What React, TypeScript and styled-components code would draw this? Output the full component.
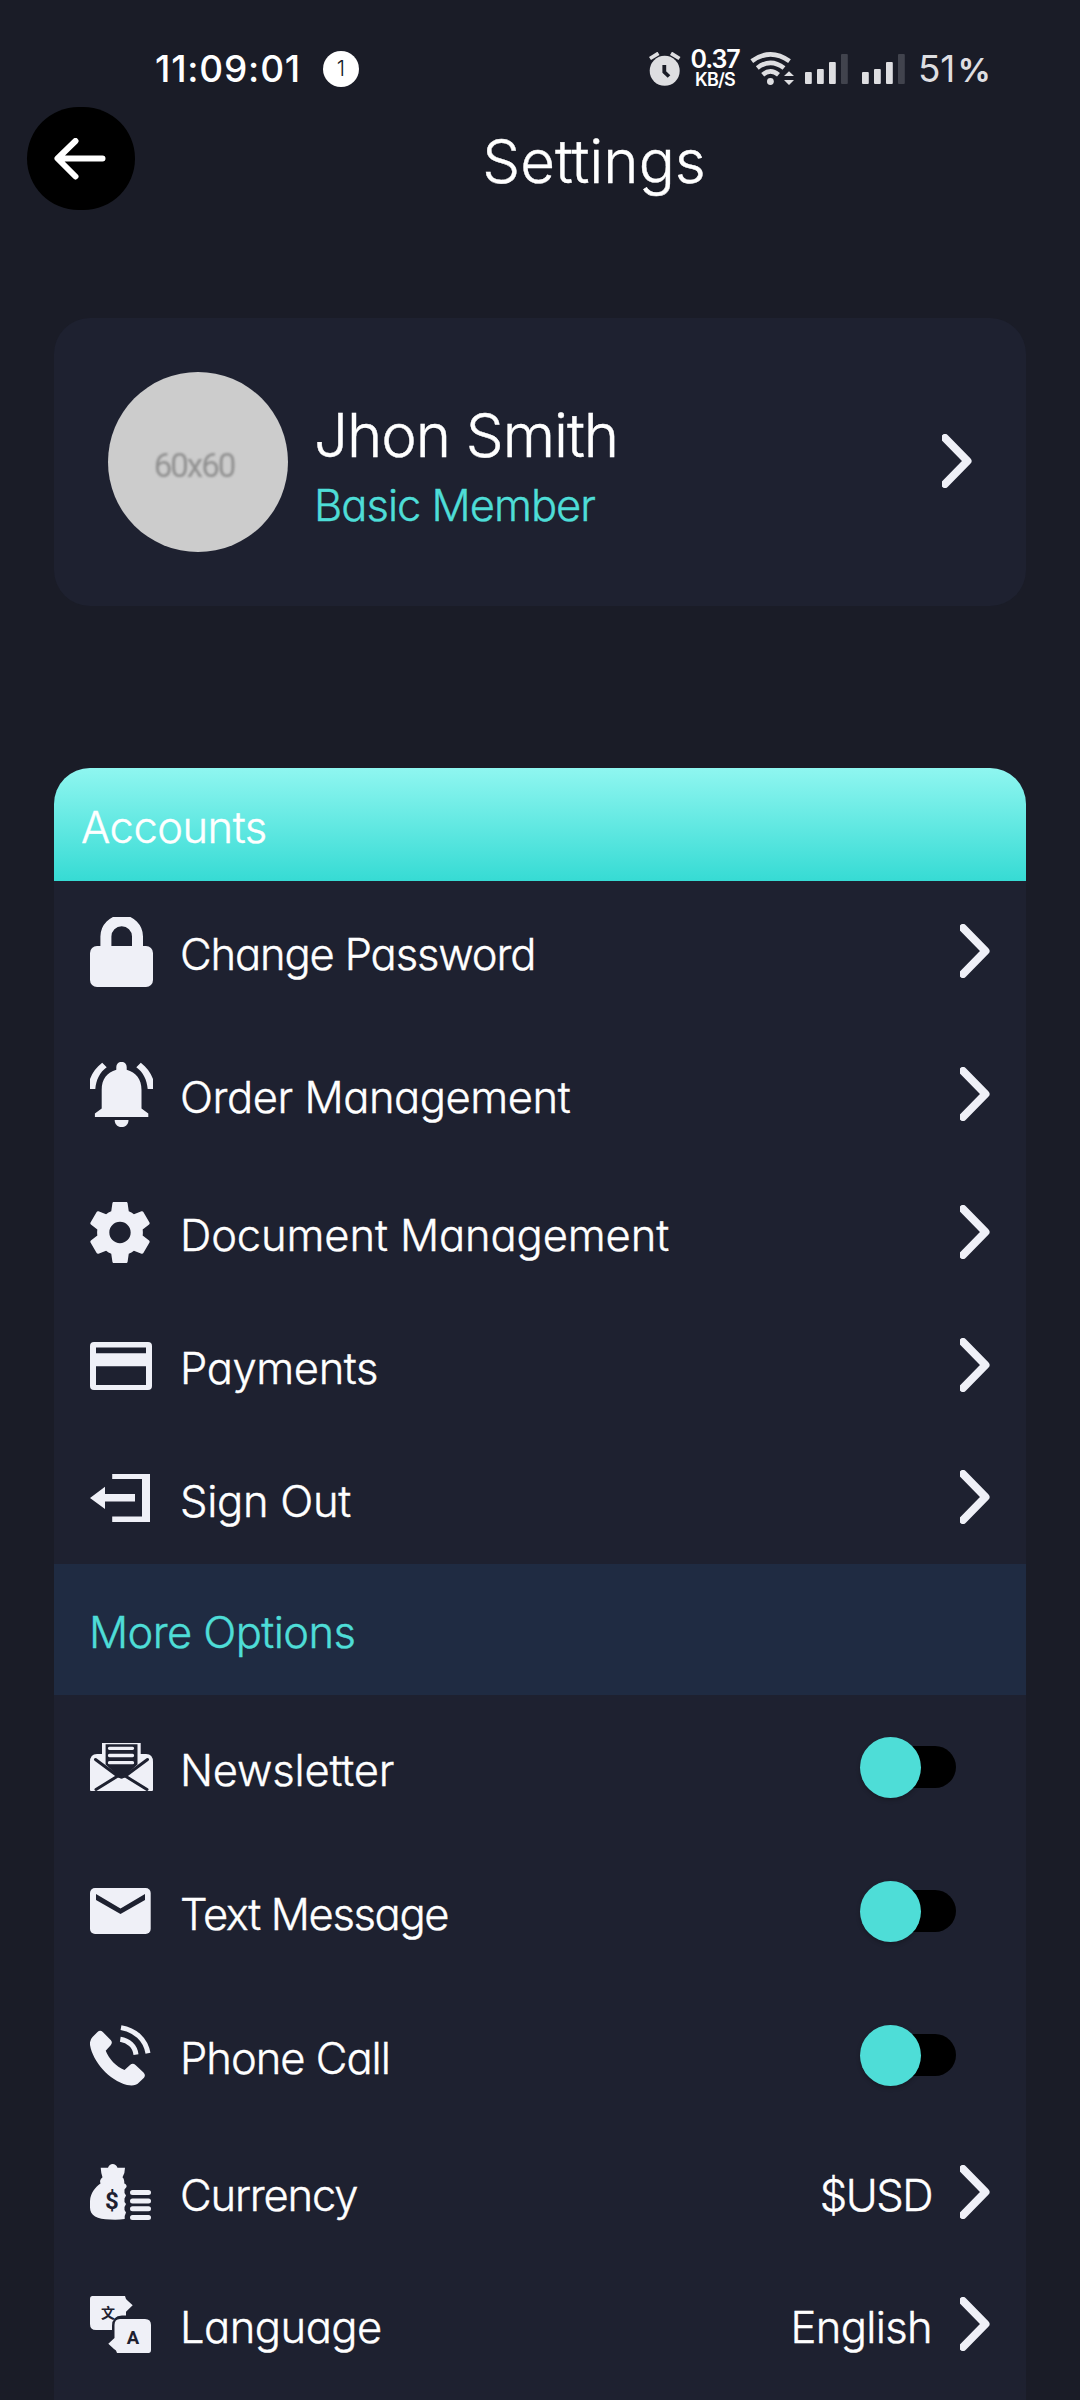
import React, { useState } from "react";
import styled, { createGlobalStyle } from "styled-components";

const color = {
  page: "#1a1c27",
  panel: "#1e2130",
  band: "#1f2b42",
  teal: "#4eddd7",
  icon: "#eff0f7",
  status: "#dedee1",
};

const GlobalStyle = createGlobalStyle`
  *, *::before, *::after { box-sizing: border-box; }
  body {
    margin: 0;
    background: ${color.page};
    color: #fff;
    font-family: Inter, "Open Sans", sans-serif;
    font-weight: 300;
    font-feature-settings: "cv11";
  }
`;

const Screen = styled.div`
  width: 1080px;
  height: 2400px;
  overflow: hidden;
  display: flex;
  flex-direction: column;
  background: ${color.page};
`;

/* ---------- status bar ---------- */

const StatusBar = styled.div`
  height: 77px;
  margin-top: 30px;
  padding: 0 88px 0 155px;
  display: flex;
  align-items: center;
  justify-content: space-between;
  flex: none;
`;

const StatusGroup = styled.div`
  display: flex;
  align-items: center;
`;

const Clock = styled.span`
  width: 168px;
  font-size: 37px;
  font-weight: 500;
  line-height: 1;
  letter-spacing: 0.8px;
`;

const Badge = styled.span`
  width: 36px;
  height: 36px;
  border-radius: 50%;
  background: #fff;
  color: #1a1c27;
  font-size: 21px;
  line-height: 36px;
  text-align: center;
`;

const NetSpeed = styled.div`
  width: 54px;
  margin-left: 7px;
  padding-top: 1px;
  display: flex;
  flex-direction: column;
  align-items: center;
  font-weight: 600;
`;

const Rate = styled.span`
  font-size: 25px;
  line-height: 21px;
  letter-spacing: -1.1px;
`;

const Unit = styled.span`
  font-size: 18px;
  line-height: 20px;
  letter-spacing: -0.8px;
`;

const WifiSlot = styled.div`
  display: flex;
  margin: 0 10px 0 8px;
`;

const SignalBars = styled.svg`
  display: block;
  width: 43px;
  height: 30px;
  margin-right: 14px;
`;

const Battery = styled.div`
  display: flex;
  align-items: baseline;
  margin-left: -1px;
  width: 74px;
  color: ${color.status};
  font-size: 37px;
  line-height: 1;
  font-weight: 400;
  letter-spacing: -0.3px;
`;

const Percent = styled.span`
  margin-left: 3px;
  font-size: 32px;
  font-weight: 700;
`;

/* ---------- header ---------- */

const Header = styled.header`
  height: 103px;
  padding: 0 23px 0 27px;
  display: flex;
  align-items: center;
  flex: none;
`;

const BackButton = styled.button`
  width: 108px;
  height: 103px;
  padding: 0 2px 0 0;
  border: 0;
  border-radius: 52px;
  background: #000;
  display: flex;
  align-items: center;
  justify-content: center;
`;

const Title = styled.h1`
  flex: 1;
  margin: 0;
  padding: 5px 4px 0 0;
  text-align: center;
  font-size: 60px;
  line-height: 72px;
  font-weight: 300;
  -webkit-text-stroke: 0.4px currentColor;
`;

/* ---------- profile ---------- */

const ProfileCard = styled.section`
  height: 288px;
  margin: 108px 54px 0;
  padding: 0 54px;
  border-radius: 36px;
  background: ${color.panel};
  display: flex;
  align-items: center;
  flex: none;
`;

const Avatar = styled.div`
  width: 180px;
  height: 180px;
  border-radius: 50%;
  background: #ccc;
  color: #919191;
  display: flex;
  align-items: center;
  justify-content: center;
  padding: 6px 8px 0 0;
  font-family: Roboto, sans-serif;
  font-size: 33px;
  font-weight: 400;
  letter-spacing: -2px;
`;

const AvatarSize = styled.span`
  filter: blur(0.9px);
`;

const Identity = styled.div`
  flex: 1;
  padding: 13px 0 0 26px;
  -webkit-text-stroke: 0.4px currentColor;
`;

const Name = styled.div`
  font-size: 60px;
  line-height: 72px;
  letter-spacing: -1.05px;
`;

const Tier = styled.div`
  color: ${color.teal};
  font-size: 43.5px;
  line-height: 68px;
  letter-spacing: -1px;
`;

/* ---------- settings panel ---------- */

const Panel = styled.section`
  flex: 1 0 auto;
  margin: 162px 54px 0;
  border-radius: 36px 36px 0 0;
  overflow: hidden;
  background: ${color.panel};
  -webkit-text-stroke: 0.4px currentColor;
`;

const GroupHead = styled.h2<{ $plain?: boolean }>`
  margin: 0;
  display: flex;
  align-items: center;
  height: ${(p) => (p.$plain ? 131 : 113)}px;
  padding: 4px 0 0 ${(p) => (p.$plain ? 35 : 27)}px;
  background: ${(p) =>
    p.$plain ? color.band : "linear-gradient(180deg, #8ff6f0, #36dbd4)"};
  color: ${(p) => (p.$plain ? color.teal : "#fff")};
  font-size: 43.5px;
  line-height: 52px;
  font-weight: 300;
  letter-spacing: ${(p) => (p.$plain ? -0.6 : -0.5)}px;
`;

const List = styled.ul<{ $top: number; $bottom?: number }>`
  list-style: none;
  margin: 0;
  padding: ${(p) => p.$top}px 36px ${(p) => p.$bottom || 0}px;
  display: flex;
  flex-direction: column;
  gap: 75px;
`;

const Row = styled.li<{ $h: number }>`
  height: ${(p) => p.$h}px;
  display: flex;
  align-items: center;
`;

const IconSlot = styled.div`
  width: 90px;
  display: flex;
  flex: none;
`;

const Label = styled.span<{ $track: number; $drop?: number }>`
  flex: 1;
  padding-top: ${(p) => p.$drop || 4}px;
  font-size: 43.5px;
  line-height: 52px;
  letter-spacing: ${(p) => p.$track}px;
  white-space: nowrap;
`;

const Value = styled.span<{ $track: number }>`
  margin-right: 28px;
  padding-top: 6px;
  font-size: 43.5px;
  line-height: 52px;
  letter-spacing: ${(p) => p.$track}px;
`;

const ChevronSlot = styled.span`
  display: flex;
  margin-bottom: 2px;
`;

const Switch = styled.button`
  position: relative;
  width: 96px;
  height: 61px;
  margin-right: 34px;
  padding: 9px 0 0 8px;
  border: 0;
  background: none;
  display: flex;
  align-items: flex-start;
`;

const Track = styled.span`
  flex: 1;
  height: 42px;
  border-radius: 21px;
  background: #000;
`;

const Knob = styled.span<{ $on: boolean }>`
  position: absolute;
  top: 0;
  left: ${(p) => (p.$on ? 35 : 0)}px;
  width: 61px;
  height: 61px;
  border-radius: 50%;
  background: ${color.teal};
  box-shadow: 0 2px 4px rgba(0, 0, 0, 0.25);
`;

const Svg = styled.svg`
  display: block;
  flex: none;
  -webkit-text-stroke: 0;
`;

/* ---------- icons ---------- */

type IconProps = { w: number; h: number; box?: string; children: React.ReactNode };

const Icon = ({ w, h, box, children }: IconProps) => (
  <Svg width={w} height={h} viewBox={box || `0 0 ${w} ${h}`} fill={color.icon}>
    {children}
  </Svg>
);

const Chevron = () => (
  <Icon w={30} h={54}>
    <path d="M3 4L25.5 27L3 50" fill="none" stroke={color.icon} strokeWidth="8" strokeLinecap="round" strokeLinejoin="round" />
  </Icon>
);

const ArrowLeft = () => (
  <Svg width="52" height="42" viewBox="0 0 52 42" fill="none" stroke="#fff" strokeWidth="6" strokeLinecap="round" strokeLinejoin="round">
    <path d="M21.500 3L3.500 20.500L21.500 38.500M4 20.500H48.500" />
  </Svg>
);

const LockIcon = () => (
  <Icon w={63} h={70}>
    <rect y="29" width="63" height="41" rx="7" />
    <path d="M15.900 32V19.500a15.800 15.800 0 0 1 31.600 0V32" fill="none" stroke={color.icon} strokeWidth="11" />
  </Icon>
);

const BellIcon = () => (
  <Icon w={63} h={65}>
    <path d="M26.300 7.800V5a5.200 5.200 0 0 1 10.400 0v2.800C46 10.500 51.500 17 51.500 28v18.500l6.800 5V55H4.900v-3.500l6.800-5V28C11.700 17 17 10.500 26.300 7.800Z" />
    <path d="M24.700 58H38.500C38.500 67.500 24.700 67.500 24.700 58Z" />
    <path d="M12.200.7l4.500 4.600C10 10 6 18 5.300 27H0V17C2.500 10.500 6.500 5 12.200.7ZM50.800.7l-4.500 4.600C53 10 57 18 57.700 27H63V17C60.500 10.500 56.500 5 50.800.7Z" />
  </Icon>
);

const GearIcon = () => (
  <Icon w={60} h={61} box="2.25 2 19.5 20">
    <path d="M19.43 12.98c.04-.32.07-.64.07-.98s-.03-.66-.07-.98l2.11-1.65c.19-.15.24-.42.12-.64l-2-3.46c-.12-.22-.39-.3-.61-.22l-2.49 1c-.52-.4-1.08-.73-1.69-.98l-.38-2.65C14.46 2.18 14.25 2 14 2h-4c-.25 0-.46.18-.49.42l-.38 2.65c-.61.25-1.17.59-1.69.98l-2.49-1c-.23-.09-.49 0-.61.22l-2 3.46c-.13.22-.07.49.12.64l2.11 1.65c-.04.32-.07.65-.07.98s.03.66.07.98l-2.11 1.65c-.19.15-.24.42-.12.64l2 3.46c.12.22.39.3.61.22l2.49-1c.52.4 1.08.73 1.69.98l.38 2.65c.03.24.24.42.49.42h4c.25 0 .46-.18.49-.42l.38-2.65c.61-.25 1.17-.59 1.69-.98l2.49 1c.23.09.49 0 .61-.22l2-3.46c.12-.22.07-.49-.12-.64l-2.11-1.65zM12 15.5c-1.93 0-3.5-1.57-3.5-3.5s1.57-3.5 3.5-3.5 3.5 1.57 3.5 3.5-1.57 3.5-3.5 3.5z" />
  </Icon>
);

const CardIcon = () => (
  <Icon w={62} h={48}>
    <path fillRule="evenodd" d="M4 0H58Q62 0 62 4V44Q62 48 58 48H4Q0 48 0 44V4Q0 0 4 0ZM6 5.500V11.300H56V5.500ZM6 24.300V43H56V24.300Z" />
  </Icon>
);

const SignOutIcon = () => (
  <Icon w={60} h={48}>
    <path d="M22.200 0H60V48H22.200V42.600H52V5H22.200ZM0 24L15 12.700V20H45V27.500H15V35Z" />
  </Icon>
);

const NewsletterIcon = () => (
  <Icon w={63} h={49}>
    <path d="M0 47V19Q0 11 7 11H12V0H50.700V11H56Q63 11 63 19V47Q63 48 62 48H1Q0 48 0 47Z" />
    <path d="M15.600 1.200H47.500V21.500L38 30Q36 35 33.500 35Q31.500 36.500 29.500 35Q27 35 25 30L15.600 21.500Z" fill={color.panel} />
    <path d="M5.500 16.500L27 32.500M57.500 16.500L36 32.500M6 46.500L27 33.500M57 46.500L36 33.500" stroke={color.panel} strokeWidth="3" strokeLinecap="round" />
    <path d="M19.500 5.300H42.500M19.500 12.500H42.500M19.500 19.700H42.500" stroke={color.icon} strokeWidth="3.300" strokeLinecap="round" />
  </Icon>
);

const MailIcon = () => (
  <Icon w={61} h={47}>
    <rect width="60.7" height="46" rx="5" />
    <path d="M6 6L30.500 20.500L55 6V12L30.500 26L6 12Z" fill={color.panel} />
  </Icon>
);

const PhoneIcon = () => (
  <Icon w={61} h={61}>
    <path d="M7.500 7Q10.200 4.600 12.800 7L20.700 15Q23 17.500 20.700 20.200L15.700 25.700C19 34 26 41.500 34.500 45L40 40Q42.700 37.500 45.500 40L53.500 47.500Q56 50 54 52.700L49 57.500C46 60.700 42 61 37 60C19 55 3 37 0 20Q-.5 15 2.500 12Z" />
    <path d="M31 2.600C45 5 55.500 14 58 28.300M30.300 14.300C38.500 15.500 45 21 46 29.600" fill="none" stroke={color.icon} strokeWidth="5" />
  </Icon>
);

const CurrencyIcon = () => (
  <Icon w={61} h={56}>
    <path d="M10.700 3.700H18Q19.500 0 22.700 0T27.500 3.700H35Q35 9 32.500 13.300Q34.500 15 34.300 19.500Q37 20.500 36.500 23L34.500 25.500V29L36 31.500L34.500 34.500V38L36 40L34.500 43V46L36 48.500L34.700 52V55Q28 56 20 55.500C7 55.500 0 51.500 0 43.500V37C.5 29 5 23.500 10.500 19.500Q9 16 12.500 13.300Q11 9 10.700 3.700Z" />
    <path d="M42.500 28.500H58.500M42.500 37H58.500M42.500 44.800H58.500M42.500 53.400H58.500" stroke={color.icon} strokeWidth="5" strokeLinecap="round" />
    <text x="22" y="45.300" textAnchor="middle" fontFamily="Roboto, sans-serif" fontSize="24" fontWeight="700" fill={color.panel}>$</text>
  </Icon>
);

const LanguageIcon = () => (
  <Icon w={61} h={58} box="0 -1 61 58">
    <path d="M2.500 0H35Q35.500 3.500 38 5L42.700 9.300L36 15.700V19.500H32Q22 20 22 30V34H6Q0 34 0 28V3Q0 0 2.500 0Z" />
    <path d="M30 23H55Q61 23 61 29V54Q61 57 58.500 57H27Q26.500 54 24 53L18.300 47.700L24.500 42V29Q24.500 23 30 23Z" />
    <text x="18" y="21.500" textAnchor="middle" fontFamily='"Noto Sans CJK SC", sans-serif' fontSize="14" fontWeight="700" fill={color.panel}>文</text>
    <text x="43" y="47.800" textAnchor="middle" fontFamily="Roboto, sans-serif" fontSize="18.500" fontWeight="700" fill={color.panel}>A</text>
  </Icon>
);

const AlarmIcon = () => (
  <Svg width="32" height="34" viewBox="0 0 32 34" fill={color.status}>
    <circle cx="15.700" cy="18.800" r="15" />
    <path d="M1 6.500L9.500 1.300M22 1.300L30.500 6.500" stroke={color.status} strokeWidth="3.800" />
    <path d="M15.300 13V20L20 24.500" fill="none" stroke={color.page} strokeWidth="3.800" />
  </Svg>
);

const WifiIcon = () => (
  <Svg width="45" height="35" viewBox="0 0 45 35" fill={color.status}>
    <path d="M1.800 10.200Q20.400 -3.500 39.500 10.200M7.300 17Q20.400 6.700 34 17M12.700 23.700Q20.400 17 28.500 23.700" fill="none" stroke={color.status} strokeWidth="4.600" />
    <circle cx="20.400" cy="30.500" r="3.400" />
    <path d="M39 20.300L44 25H34ZM34 29H44L39 34Z" />
  </Svg>
);

const Signal = () => (
  <SignalBars viewBox="0 0 43 30" fill={color.status}>
    <rect x="0" y="18" width="6.800" height="12" rx="1" />
    <rect x="12" y="15" width="6.800" height="15" rx="1" />
    <rect x="24" y="8" width="6.800" height="22" rx="1" />
    <rect x="36" y="0" width="6.800" height="30" rx="1" fill="#41434d" />
  </SignalBars>
);

/* ---------- data ---------- */

const accountRows = [
  { label: "Change Password", track: -1.15, h: 70, icon: <LockIcon /> },
  { label: "Order Management", track: -0.45, h: 65, icon: <BellIcon /> },
  { label: "Document Management", track: -0.12, h: 61, icon: <GearIcon /> },
  { label: "Payments", track: -0.4, h: 56, icon: <CardIcon /> },
  { label: "Sign Out", track: -0.3, h: 58, drop: 6, icon: <SignOutIcon /> },
];

const toggleRows = [
  { label: "Newsletter", track: -0.2, icon: <NewsletterIcon /> },
  { label: "Text Message", track: -1.35, icon: <MailIcon /> },
  { label: "Phone Call", track: -1, icon: <PhoneIcon /> },
];

const valueRows = [
  { label: "Currency", track: -1.2, value: "$USD", valueTrack: -1.5, h: 54, icon: <CurrencyIcon /> },
  { label: "Language", track: -0.5, value: "English", valueTrack: -0.65, h: 60, icon: <LanguageIcon /> },
];

const ToggleRow = ({ label, track, icon }: { label: string; track: number; icon: React.ReactNode }) => {
  const [on, setOn] = useState(false);
  return (
    <Row $h={69}>
      <IconSlot>{icon}</IconSlot>
      <Label $track={track}>{label}</Label>
      <Switch role="switch" aria-checked={on} onClick={() => setOn(!on)}>
        <Track />
        <Knob $on={on} />
      </Switch>
    </Row>
  );
};

export default function App() {
  return (
    <Screen>
      <GlobalStyle />
      <StatusBar>
        <StatusGroup>
          <Clock>11:09:01</Clock>
          <Badge>1</Badge>
        </StatusGroup>
        <StatusGroup>
          <AlarmIcon />
          <NetSpeed>
            <Rate>0.37</Rate>
            <Unit>KB/S</Unit>
          </NetSpeed>
          <WifiSlot>
            <WifiIcon />
          </WifiSlot>
          <Signal />
          <Signal />
          <Battery>
            51<Percent>%</Percent>
          </Battery>
        </StatusGroup>
      </StatusBar>

      <Header>
        <BackButton>
          <ArrowLeft />
        </BackButton>
        <Title>Settings</Title>
      </Header>

      <ProfileCard>
        <Avatar>
          <AvatarSize>60x60</AvatarSize>
        </Avatar>
        <Identity>
          <Name>Jhon Smith</Name>
          <Tier>Basic Member</Tier>
        </Identity>
        <ChevronSlot>
          <Chevron />
        </ChevronSlot>
      </ProfileCard>

      <Panel>
        <GroupHead>Accounts</GroupHead>
        <List $top={36} $bottom={37}>
          {accountRows.map((r) => (
            <Row key={r.label} $h={r.h}>
              <IconSlot>{r.icon}</IconSlot>
              <Label $track={r.track} $drop={r.drop}>{r.label}</Label>
              <ChevronSlot>
                <Chevron />
              </ChevronSlot>
            </Row>
          ))}
        </List>
        <GroupHead $plain>More Options</GroupHead>
        <List $top={38}>
          {toggleRows.map((r) => (
            <ToggleRow key={r.label} {...r} />
          ))}
          {valueRows.map((r) => (
            <Row key={r.label} $h={r.h}>
              <IconSlot>{r.icon}</IconSlot>
              <Label $track={r.track} $drop={6}>{r.label}</Label>
              <Value $track={r.valueTrack}>{r.value}</Value>
              <Chevron />
            </Row>
          ))}
        </List>
      </Panel>
    </Screen>
  );
}
